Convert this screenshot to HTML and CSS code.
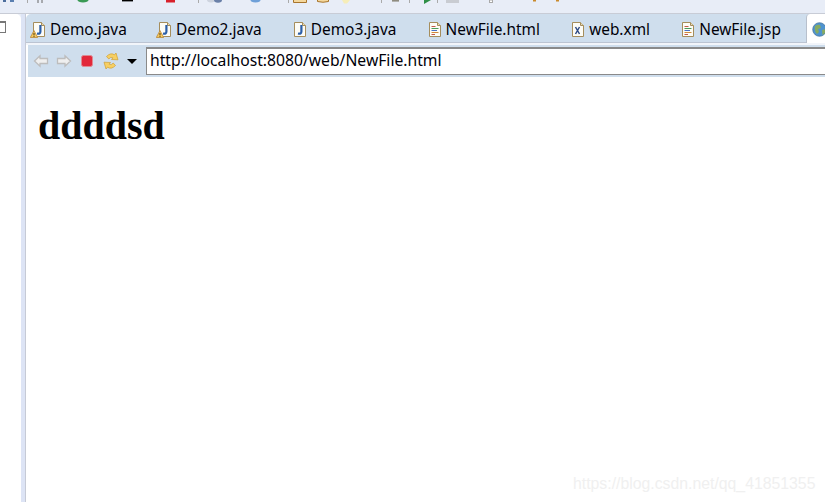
FILE: index.html
```html
<!DOCTYPE html>
<html lang="en">
<head>
<meta charset="utf-8">
<title>NewFile.html</title>
<link rel="stylesheet" href="styles.css">
</head>
<body>
<svg width="0" height="0" class="defs">
  <defs>
    <symbol id="page" viewBox="0 0 14 16">
      <path d="M1.500 1.500H9.500L12.500 4.500V15.500H1.500Z" fill="#fdfcf6" stroke="#a58d5c"/>
      <path d="M9.500 1.500V4.500H12.500" fill="#e8dcb8" stroke="#a58d5c"/>
    </symbol>
    <symbol id="warn" viewBox="0 0 8 8">
      <path d="M4 .5L7.700 7.500H.3Z" fill="#f6c95c" stroke="#b9873a" stroke-width=".8"/>
      <path d="M4 3V5.400M4 6V6.900" stroke="#4a3510" stroke-width="1"/>
    </symbol>
    <symbol id="javaj" viewBox="0 0 14 16">
      <path d="M8.400 4V10.500C8.400 12.500 7.200 13 5 12.500" fill="none" stroke="#2a5ea8" stroke-width="2.200"/>
    </symbol>
    <symbol id="docl" viewBox="0 0 14 16">
      <path d="M3.500 5.500H7.500" stroke="#c45a4a"/><path d="M3.500 7.500H10.500" stroke="#4a9a5a"/>
      <path d="M3.500 9.500H9" stroke="#4a72c4"/><path d="M3.500 11.500H10.500" stroke="#d08a3a"/>
      <path d="M3.500 13.500H7" stroke="#c45a4a"/>
    </symbol>
  </defs>
</svg>

<svg class="strip" width="825" height="13" viewBox="0 0 825 13" aria-hidden="true">
  <rect x="3" y="0" width="3" height="2" fill="#4b6d9c"/><rect x="10" y="0" width="4" height="2" fill="#5a7fb0"/>
  <rect x="27" y="0" width="1" height="3" fill="#a9a9a9"/>
  <path d="M38 0V3M42 0V3" stroke="#666" fill="none"/>
  <ellipse cx="83" cy="0" rx="5.500" ry="2.600" fill="#3a9a55"/>
  <rect x="122" y="0" width="11" height="1.400" fill="#000"/>
  <rect x="166" y="0" width="9" height="2.500" fill="#d8202a"/>
  <rect x="198" y="0" width="1" height="3" fill="#aaa"/>
  <ellipse cx="211" cy="0" rx="4" ry="2.400" fill="#cdd3de"/><ellipse cx="218" cy="0" rx="4" ry="2.800" fill="#6a80a8"/>
  <ellipse cx="255.500" cy="0" rx="5" ry="2.400" fill="#6fa0d8"/>
  <rect x="288" y="0" width="1" height="3" fill="#aaa"/>
  <path d="M293.500 0V2.500H306.500V0" fill="#f4d79c" stroke="#a8752c"/>
  <path d="M317.500 0V1.500Q323 3 328.500 1.500V0" fill="#f4d79c" stroke="#a8752c"/>
  <path d="M342 0H350L347 3.500H344Z" fill="#f6edb8"/>
  <rect x="381" y="0" width="1" height="3" fill="#aaa"/>
  <rect x="392" y="0" width="7" height="1.600" fill="#8f8c80"/>
  <rect x="409" y="0" width="1" height="3" fill="#aaa"/>
  <path d="M424 0H431L424 4Z" fill="#2f8f46"/>
  <rect x="437" y="0" width="1" height="3" fill="#aaa"/>
  <rect x="446" y="0" width="13" height="3" fill="#c9ccd2"/>
  <rect x="489.500" y="0" width="3" height="2.500" fill="#fff" stroke="#a9a9a9"/>
  <rect x="533" y="0" width="3" height="1.500" fill="#c98a2c"/>
  <rect x="556" y="0" width="3" height="1.500" fill="#c98a2c"/>
</svg>

<div class="work">
  <aside class="side">
    <div class="side-head"><span class="restore"></span></div>
  </aside>
  <div class="sash"></div>
  <main class="editor">
    <nav class="tabs">
      <div class="tab">
        <span class="ico"><svg width="14" height="16"><use href="#page"/><use href="#javaj"/></svg><svg class="badge" width="8" height="8"><use href="#warn"/></svg></span>
        <span class="label">Demo.java</span>
      </div>
      <div class="tab">
        <span class="ico"><svg width="14" height="16"><use href="#page"/><use href="#javaj"/></svg><svg class="badge" width="8" height="8"><use href="#warn"/></svg></span>
        <span class="label">Demo2.java</span>
      </div>
      <div class="tab">
        <span class="ico"><svg width="14" height="16"><use href="#page"/><use href="#javaj"/></svg></span>
        <span class="label">Demo3.java</span>
      </div>
      <div class="tab">
        <span class="ico"><svg width="14" height="16"><use href="#page"/><use href="#docl"/></svg></span>
        <span class="label">NewFile.html</span>
      </div>
      <div class="tab">
        <span class="ico"><svg width="14" height="16"><use href="#page"/><path d="M4.500 6L8.500 13M8.500 6L4.500 13" stroke="#2d4a86" stroke-width="1.500"/></svg></span>
        <span class="label">web.xml</span>
      </div>
      <div class="tab">
        <span class="ico"><svg width="14" height="16"><use href="#page"/><use href="#docl"/></svg></span>
        <span class="label">NewFile.jsp</span>
      </div>
      <div class="tab-active">
        <svg width="15" height="15" viewBox="0 0 15 15">
          <circle cx="7.500" cy="7.500" r="6.800" fill="#4f93cf" stroke="#3f7098" stroke-width=".7"/>
          <path d="M3 4Q6 2 8 3L9 6L6 7L7 10L5 12Q2 9 3 4ZM10 8L14 7L13 11L10.500 13Z" fill="#86ab62"/>
        </svg>
      </div>
    </nav>
    <div class="gutter"></div>
    <div class="navbar">
      <div class="nav-buttons">
        <svg class="nav-i" width="16" height="16" viewBox="0 0 16 16"><path d="M1.500 8L7 2.800V5.500H14.500V10.500H7V13.200Z" fill="#efefef" stroke="#bdbdbd" stroke-width="1.300"/></svg>
        <svg class="nav-i" width="16" height="16" viewBox="0 0 16 16"><path d="M14.500 8L9 2.800V5.500H1.500V10.500H9V13.200Z" fill="#efefef" stroke="#bdbdbd" stroke-width="1.300"/></svg>
        <svg class="nav-i" width="16" height="16" viewBox="0 0 16 16"><rect x="2.500" y="2.500" width="11" height="11" rx="2" fill="#e2283a" stroke="#e08a92"/></svg>
        <svg class="nav-i" width="18" height="18" viewBox="0 0 18 18">
          <path d="M4.500 4.500Q8.500 .2 12.500 2.800L14 1L16 7.800L9.500 7.500L11 5.800Q8.500 4.500 6.800 7Z" fill="#f7cf62" stroke="#cf9f34" stroke-width=".7"/>
          <path d="M13.500 13.500Q9.500 17.800 5.500 15.200L4 17L2 10.200L8.500 10.500L7 12.200Q9.500 13.500 11.200 11Z" fill="#f7cf62" stroke="#cf9f34" stroke-width=".7"/>
        </svg>
        <span class="caret"></span>
      </div>
      <div class="address">http://localhost:8080/web/NewFile.html</div>
    </div>
    <article class="page">
      <h1>ddddsd</h1>
    </article>
  </main>
</div>
<div class="watermark">https://blog.csdn.net/qq_41851355</div>
</body>
</html>
```
FILE: styles.css
```css
html, body { margin: 0; padding: 0; height: 100%; overflow: hidden; background: #fff; }
body { position: relative; display: flex; flex-direction: column; width: 825px; height: 502px; font-family: "Noto Sans", sans-serif; }
.defs { position: absolute; }
.strip { display: block; flex: none; background: #e8edf7; border-bottom: 1px solid #c8ccd6; box-sizing: content-box; }
.work { flex: 1; display: flex; min-height: 0; background: #e8edf7; }
.side { width: 21px; flex: none; background: #fff; border-top-right-radius: 5px; }
.side-head { padding-top: 7px; }
.restore { display: block; width: 5px; height: 9px; border: 1px solid #777; border-left: 0; border-top-width: 2px; }
.sash { width: 4px; flex: none; background: #dde4f5; }
.editor { flex: 1; min-width: 0; display: flex; flex-direction: column; background: #fff; border-left: 1px solid #c6cad6; overflow: hidden; }
.tabs { height: 29px; flex: none; box-sizing: border-box; display: flex; align-items: center; padding: 2px 0 0 6px; background: #cfdeed; border-top-left-radius: 5px; border-bottom: 1px solid #bcc4d2; font-size: 15.4px; line-height: 20px; color: #000008; white-space: nowrap; }
.tab { flex: none; display: flex; align-items: center; gap: 4px; padding-right: 31.200px; }
.label { padding-top: 2px; }
.ico { position: relative; width: 14px; height: 16px; flex: none; }
.ico svg { display: block; }
.ico .badge { position: absolute; left: -2px; bottom: -1px; }
.tab-active { flex: none; align-self: stretch; width: 40px; margin: -2px 0 -1px -6px; padding: 8px 0 0 5px; box-sizing: border-box; background: #fff; border-top-left-radius: 4px; border-left: 1px solid #b8c0cc; }
.tab-active svg { display: block; }
.gutter { height: 2px; flex: none; background: #f2f5fa; }
.navbar { height: 32px; flex: none; display: flex; align-items: center; margin-left: 2px; background: #cfdeed; }
.nav-buttons { width: 118px; flex: none; display: flex; align-items: center; gap: 7px; padding-left: 5px; box-sizing: border-box; }
.nav-i { display: block; flex: none; }
.caret { width: 0; height: 0; border-style: solid; border-width: 5px 5px 0; border-color: #000 transparent transparent; }
.address { flex: 1; height: 28px; box-sizing: border-box; padding-left: 3px; background: #fff; border: 1px solid #8a8a8a; border-top-width: 2px; border-right: 0; font-size: 15.7px; line-height: 22px; color: #000008; white-space: nowrap; }
.page { flex: 1; padding: 26px 0 0 12px; }
h1 { margin: 0; font-family: "Liberation Serif", serif; font-size: 40px; line-height: 46px; font-weight: 700; color: #000; }
.watermark { position: absolute; left: 573px; top: 474px; font-family: "Liberation Sans", sans-serif; font-size: 15.8px; line-height: 20px; color: #f0f0f0; white-space: nowrap; }
```
